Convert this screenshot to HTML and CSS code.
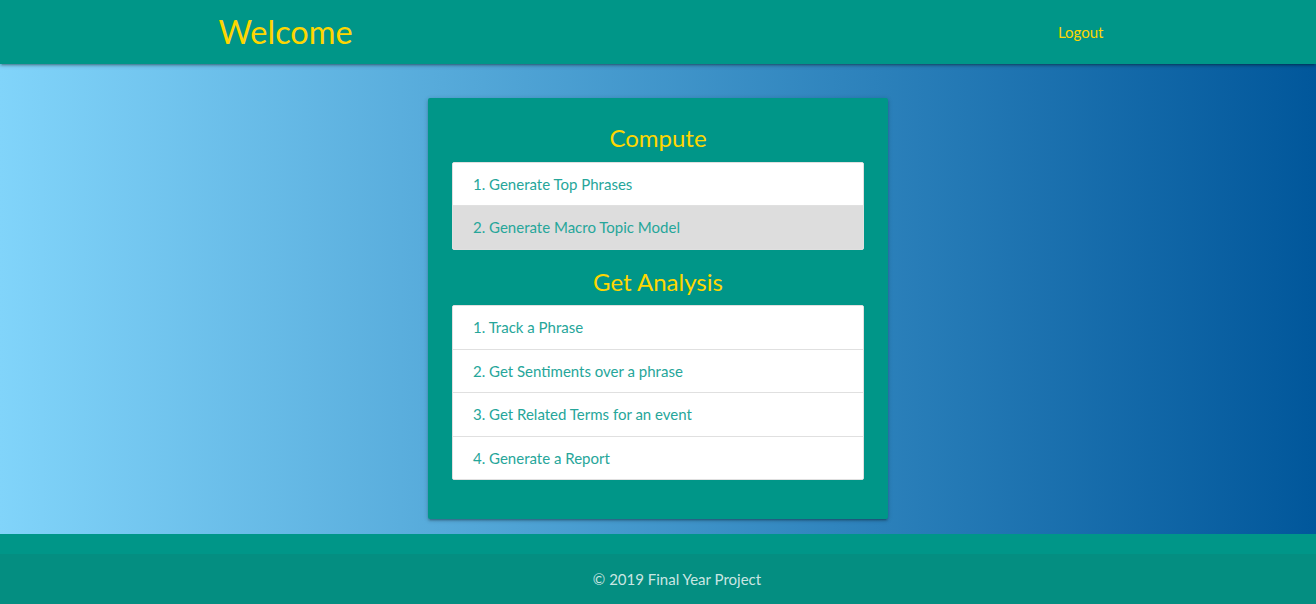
FILE: index.html
```html
<!DOCTYPE html>
<html>
<head>
<meta charset="utf-8">
<title>Welcome</title>
<link rel="stylesheet" href="styles.css">
</head>
<body>
<nav class="nav">
  <div class="container nav-wrapper">
    <a class="brand-logo" href="#">Welcome</a>
    <ul class="nav-links">
      <li><a href="#">Logout</a></li>
    </ul>
  </div>
</nav>
<main class="main">
  <div class="card">
    <div class="card-content">
      <div class="card-title">Compute</div>
      <div class="collection">
        <a href="#" class="collection-item">1. Generate Top Phrases</a>
        <a href="#" class="collection-item hover">2. Generate Macro Topic Model</a>
      </div>
      <div class="card-title">Get Analysis</div>
      <div class="collection">
        <a href="#" class="collection-item">1. Track a Phrase</a>
        <a href="#" class="collection-item">2. Get Sentiments over a phrase</a>
        <a href="#" class="collection-item">3. Get Related Terms for an event</a>
        <a href="#" class="collection-item">4. Generate a Report</a>
      </div>
    </div>
  </div>
</main>
<footer class="page-footer">
  <div class="footer-copyright">
    <div class="container copy-text">© 2019 Final Year Project</div>
  </div>
</footer>
</body>
</html>
```
FILE: styles.css
```css
* { box-sizing: border-box; }
html { font-size: 15px; line-height: 1.5; }
body {
  margin: 0;
  min-height: 100vh;
  display: flex;
  flex-direction: column;
  font-family: Lato, "Noto Sans", sans-serif;
  background: linear-gradient(to right, #81d4fa, #01579b);
  color: rgba(0,0,0,0.87);
}
a { text-decoration: none; }
.container { width: 921px; margin: 0 auto; }
.nav {
  height: 64px;
  background: #009688;
  box-shadow: 0 2px 2px 0 rgba(0,0,0,0.14), 0 3px 1px -2px rgba(0,0,0,0.12), 0 1px 5px 0 rgba(0,0,0,0.2);
  position: relative;
  z-index: 2;
}
.nav-wrapper {
  height: 64px;
  display: flex;
  align-items: center;
  justify-content: space-between;
}
.brand-logo {
  color: #ffd600;
  font-size: 32.5px;
  line-height: 64px;
  padding-left: 21px;
}
.nav-links { list-style: none; margin: 0; padding: 0; display: flex; }
.nav-links a {
  display: block;
  color: #ffd600;
  font-size: 15px;
  line-height: 64px;
  padding: 0 15px;
}
.main { flex: 1; display: flex; flex-direction: column; align-items: center; }
.card {
  width: 460px;
  margin-top: 34px;
  background: #009688;
  border-radius: 2px;
  box-shadow: 0 2px 2px 0 rgba(0,0,0,0.14), 0 3px 1px -2px rgba(0,0,0,0.12), 0 1px 5px 0 rgba(0,0,0,0.2);
}
.card-content { padding: 24px 24px 23px; }
.card-title {
  color: #ffd600;
  font-size: 24px;
  line-height: 32px;
  text-align: center;
}
.collection {
  margin: 7.5px 0 16px;
  border: 1px solid #e0e0e0;
  border-radius: 2px;
  background: #fff;
  overflow: hidden;
}
.collection-item {
  display: block;
  padding: 10px 20px;
  line-height: 22.5px;
  font-size: 15px;
  color: #26a69a;
  background: #fff;
  border-bottom: 1px solid #e0e0e0;
}
.collection-item:last-child { border-bottom: none; }
.collection-item.hover { background: #ddd; }
.page-footer { background: #009688; padding-top: 20px; }
.footer-copyright {
  min-height: 50px;
  display: flex;
  align-items: center;
  background: rgba(51,51,51,0.08);
  color: rgba(255,255,255,0.8);
}
.copy-text { text-align: center; padding-left: 38px; font-size: 15px; }
```
